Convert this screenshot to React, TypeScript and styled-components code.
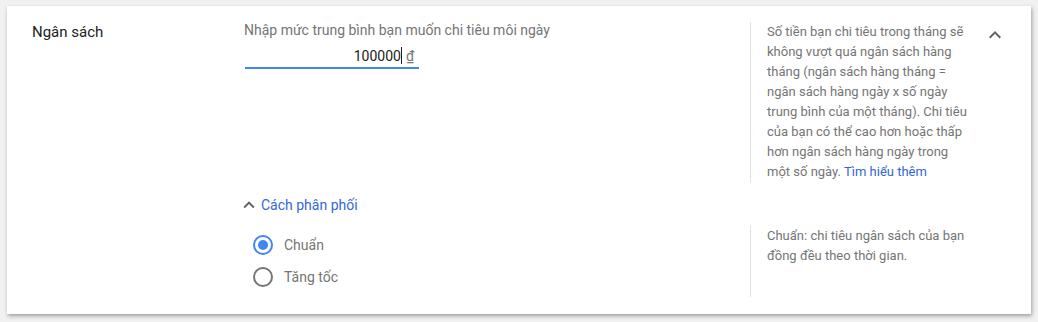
import * as React from 'react';
import styled, { createGlobalStyle } from 'styled-components';

const GlobalStyle = createGlobalStyle`
    html, body {
        margin: 0;
        padding: 0;
        background: #f1f1f1;
        font-family: Roboto, "Liberation Sans", Arial, sans-serif;
    }
`;

const Page = styled.div`
    padding: 6px 7px 8px 7px;
`;

const Card = styled.div`
    background: #fff;
    width: 1024px;
    box-sizing: border-box;
    padding: 16px 24px 17px 25px;
    box-shadow: 1px 2px 4px rgba(0, 0, 0, 0.35);
`;

const Grid = styled.div`
    display: grid;
    grid-template-columns: 212px 506px 1fr 24px;
    align-items: start;
`;

const SectionTitle = styled.div`
    font-size: 15px;
    line-height: 20px;
    color: #212121;
`;

const Main = styled.div`
    display: flex;
    flex-direction: column;
`;

const FieldLabel = styled.div`
    font-size: 14px;
    line-height: 16px;
    color: #757575;
`;

const InputBox = styled.div`
    width: 174px;
    box-sizing: border-box;
    margin-left: 1px;
    margin-top: 6px;
    height: 25px;
    padding-right: 5px;
    display: flex;
    justify-content: flex-end;
    align-items: center;
    border-bottom: 2px solid #4285f4;
    font-size: 14px;
`;

const Value = styled.span`
    color: #212121;
`;

const Caret = styled.span`
    display: inline-block;
    width: 1px;
    height: 17px;
    background: #212121;
    margin: 0 4px 0 0;
`;

const Currency = styled.span`
    color: #757575;
    text-decoration: underline;
`;

interface HelpProps {
    readonly stretch?: boolean;
}

const Help = styled.div<HelpProps>`
    border-left: 1px solid #e0e0e0;
    padding: 0 16px;
    font-size: 13px;
    line-height: 20px;
    color: #757575;
    align-self: ${(p) => (p.stretch ? 'stretch' : 'start')};
`;

const HelpLink = styled.a`
    color: #3367d6;
    text-decoration: none;
`;

const ChevronButton = styled.div`
    width: 24px;
    height: 24px;
    margin-top: 1px;
    color: #616161;
`;

const Toggle = styled.div`
    grid-column: 2 / span 1;
    display: flex;
    align-items: center;
    margin-top: 13px;
    height: 20px;
    color: #3367d6;
    font-size: 14px;
    svg {
        color: #616161;
        margin-left: -6px;
        margin-right: 1px;
    }
`;

const RadioGroup = styled.div`
    grid-column: 2 / span 1;
    display: flex;
    flex-direction: column;
    padding: 3px 0 4px 9px;
    margin-top: 11px;
`;

const RadioRow = styled.label`
    display: flex;
    align-items: center;
    height: 32px;
    font-size: 14px;
    color: #757575;
`;

interface RadioProps {
    readonly checked?: boolean;
}

const RadioCircle = styled.span<RadioProps>`
    width: 20px;
    height: 20px;
    box-sizing: border-box;
    border-radius: 50%;
    border: 2px solid ${(p) => (p.checked ? '#4285f4' : '#757575')};
    display: flex;
    align-items: center;
    justify-content: center;
    margin-right: 11px;
    &::after {
        content: '';
        width: 10px;
        height: 10px;
        border-radius: 50%;
        background: ${(p) => (p.checked ? '#4285f4' : 'transparent')};
    }
`;

const Help2 = styled(Help)`
    grid-column: 3 / span 1;
    margin-top: 11px;
`;

function ChevronUp(props: { readonly size: number }) {
    return (
        <svg width={props.size} height={props.size} viewBox="0 0 24 24" fill="currentColor">
            <path d="M7.41 15.41L12 10.83l4.59 4.58L18 14l-6-6-6 6z" />
        </svg>
    );
}

export default function App() {
    return (
        <Page>
            <GlobalStyle />
            <Card>
                <Grid>
                    <SectionTitle>Ngân sách</SectionTitle>
                    <Main>
                        <FieldLabel>Nhập mức trung bình bạn muốn chi tiêu môi ngày</FieldLabel>
                        <InputBox>
                            <Value>100000</Value>
                            <Caret />
                            <Currency>₫</Currency>
                        </InputBox>
                    </Main>
                    <Help>
                        Số tiền bạn chi tiêu trong tháng sẽ không vượt quá ngân sách hàng tháng (ngân
                        sách hàng tháng = ngân sách hàng ngày x số ngày trung bình của một tháng). Chi
                        tiêu của bạn có thể cao hơn hoặc thấp hơn ngân sách hàng ngày trong một số
                        ngày. <HelpLink href="#">Tìm hiểu thêm</HelpLink>
                    </Help>
                    <ChevronButton>
                        <ChevronUp size={24} />
                    </ChevronButton>

                    <Toggle>
                        <ChevronUp size={22} />
                        Cách phân phối
                    </Toggle>
                    <div />
                    <div />

                    <div />
                    <RadioGroup>
                        <RadioRow>
                            <RadioCircle checked={true} />
                            Chuẩn
                        </RadioRow>
                        <RadioRow>
                            <RadioCircle />
                            Tăng tốc
                        </RadioRow>
                    </RadioGroup>
                    <Help2 stretch={true}>
                        Chuẩn: chi tiêu ngân sách của bạn đồng đều theo thời gian.
                    </Help2>
                    <div />
                </Grid>
            </Card>
        </Page>
    );
}
